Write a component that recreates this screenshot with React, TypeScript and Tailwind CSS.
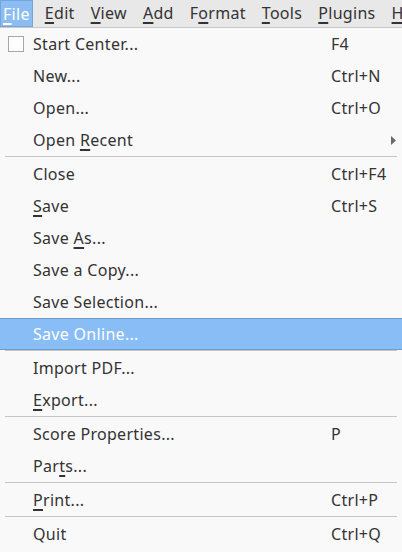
import React from "react";

type Item = { label: React.ReactNode; shortcut?: string; sep?: boolean; active?: boolean; check?: boolean; sub?: boolean };

// underline the mnemonic letter
const U = ({ children }: { children: React.ReactNode }) => (
  <span className="underline underline-offset-[3px] decoration-[1.5px]">{children}</span>
);

const menuBar: React.ReactNode[] = [
  <><U>F</U>ile</>,
  <><U>E</U>dit</>,
  <><U>V</U>iew</>,
  <><U>A</U>dd</>,
  <>F<U>o</U>rmat</>,
  <><U>T</U>ools</>,
  <><U>P</U>lugins</>,
  <><U>H</U>elp</>,
];

const items: Item[] = [
  { label: "Start Center...", shortcut: "F4", check: true },
  { label: "New...", shortcut: "Ctrl+N" },
  { label: "Open...", shortcut: "Ctrl+O" },
  { label: <>Open <U>R</U>ecent</>, sub: true },
  { label: "", sep: true },
  { label: "Close", shortcut: "Ctrl+F4" },
  { label: <><U>S</U>ave</>, shortcut: "Ctrl+S" },
  { label: <>Save <U>A</U>s...</> },
  { label: "Save a Copy..." },
  { label: "Save Selection..." },
  { label: "Save Online...", active: true },
  { label: "", sep: true },
  { label: "Import PDF..." },
  { label: <><U>E</U>xport...</> },
  { label: "", sep: true },
  { label: "Score Properties...", shortcut: "P" },
  { label: <>Par<U>t</U>s...</> },
  { label: "", sep: true },
  { label: <><U>P</U>rint...</>, shortcut: "Ctrl+P" },
  { label: "", sep: true },
  { label: "Quit", shortcut: "Ctrl+Q" },
];

export default function App() {
  return (
    <div className="w-[402px] h-[552px] overflow-hidden bg-[#f9f9f9] text-[16px] tracking-[0.3px] text-[#333333]" style={{ fontFamily: '"Noto Sans", "Open Sans", sans-serif' }}>
      {/* menu bar */}
      <div className="flex h-[28px] bg-[#e8e8e8] border-b border-[#c8c8c8] whitespace-nowrap overflow-hidden">
        {menuBar.map((m, i) => (
          <div
            key={i}
            className={
              "shrink-0 h-[27px] leading-[27px] mr-[8px] " +
              (i === 0 ? "bg-[#8cbdf2] text-white border border-[#74a6dc] leading-[25px] px-[2px]" : "px-[4px]")
            }
          >
            {m}
          </div>
        ))}
      </div>

      {/* file menu */}
      <div className="flex flex-col">
        {items.map((it, i) =>
          it.sep ? (
            <div key={i} className="h-[2px] mx-[5px] border-t border-[#c6c6c6]" />
          ) : (
            <div
              key={i}
              className={
                "relative flex items-center h-[32px] pl-[33px] pr-[8px] " +
                (it.active ? "bg-[#88bdf6] text-white border-t border-b border-[#6f9bc8]" : "")
              }
            >
              {it.check && (
                <span className="absolute left-[8px] top-[8px] w-[16px] h-[16px] border border-[#a8a8a8] bg-[#fdfdfd]" />
              )}
              <span className="flex-1">{it.label}</span>
              {it.shortcut && <span className="absolute left-[331px]">{it.shortcut}</span>}
              {it.sub && (
                <svg className="absolute left-[391px]" width="5" height="9" viewBox="0 0 5 9">
                  <path d="M0 0 L5 4.5 L0 9 Z" fill="#6a6a6a" />
                </svg>
              )}
            </div>
          )
        )}
      </div>
    </div>
  );
}
